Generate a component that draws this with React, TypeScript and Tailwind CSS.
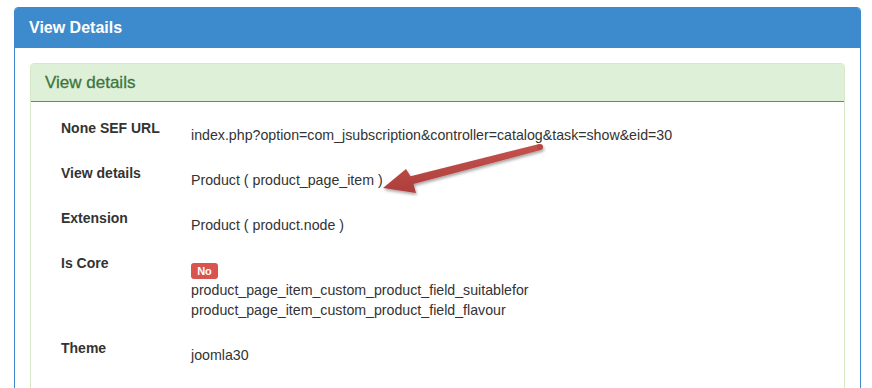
// View Details panel (bootstrap-ish panels: primary outer, success inner) with an
// annotation arrow drawn over the rows.
type Row = { label: string; value: React.ReactNode };

const rows: Row[] = [
  { label: 'None SEF URL', value: 'index.php?option=com_jsubscription&controller=catalog&task=show&eid=30' },
  { label: 'View details', value: 'Product ( product_page_item )' },
  { label: 'Extension', value: 'Product ( product.node )' },
  {
    label: 'Is Core',
    value: (
      <>
        <div className="flex h-[20px] items-center">
          <span className="mt-[2px] inline-flex h-[16px] w-[27px] items-center justify-center rounded-[3px] bg-[#d9534f] text-[11px] font-bold text-white">No</span>
        </div>
        <div>product_page_item_custom_product_field_suitablefor</div>
        <div>product_page_item_custom_product_field_flavour</div>
      </>
    ),
  },
  { label: 'Theme', value: 'joomla30' },
  { label: 'Source', value: 'com_jsubscription' },
];

function Arrow() {
  return (
    <svg className="pointer-events-none absolute left-0 top-0" width="872" height="388" viewBox="0 0 872 388">
      <defs>
        <filter id="sh" x="-10%" y="-30%" width="120%" height="160%">
          <feDropShadow dx="1" dy="2" stdDeviation="1.5" floodColor="#000" floodOpacity="0.35" />
        </filter>
        <linearGradient id="ag" x1="0" y1="0" x2="0" y2="1">
          <stop offset="0" stopColor="#c4524d" />
          <stop offset="1" stopColor="#ad3f3b" />
        </linearGradient>
      </defs>
      <g filter="url(#sh)">
        <polygon
          points="383,181 416,186 413.5,177 540.8,143 539.2,137 410.5,169.2 406,162"
          fill="url(#ag)"
        />
        <circle cx="540" cy="140" r="3" fill="#b8463f" />
      </g>
    </svg>
  );
}

export default function App() {
  return (
    <div className="relative min-h-screen bg-white font-['Liberation_Sans',Arial,sans-serif] text-[14px] leading-[20px] text-[#333]">
      <div className="ml-[14px] mt-[7px] w-[847px] overflow-hidden rounded-t-[4px] border border-[#3d8bcd]">
        <div className="flex h-[40px] items-center bg-[#3d8bcd] px-[14px] text-[16px] font-bold text-white">View Details</div>
        <div className="px-[15px] pt-[15px] pb-[15px]">
          <div className="rounded-t-[4px] border border-[#d6e9c6]">
            <div className="flex h-[38px] items-center border-b border-[#3d8bcd] bg-[#dff0d8] px-[14px] text-[17px] text-[#3c763d] [-webkit-text-stroke:0.3px_#3c763d]">View details</div>
            <div className="px-[30px] pt-[16px]">
              {rows.map((r) => (
                <div key={r.label} className="mb-[18px] grid grid-cols-[130px_1fr]">
                  <div className="font-bold">{r.label}</div>
                  <div className="pt-[7px] text-[14.2px]">{r.value}</div>
                </div>
              ))}
            </div>
          </div>
        </div>
      </div>
      <Arrow />
    </div>
  );
}
